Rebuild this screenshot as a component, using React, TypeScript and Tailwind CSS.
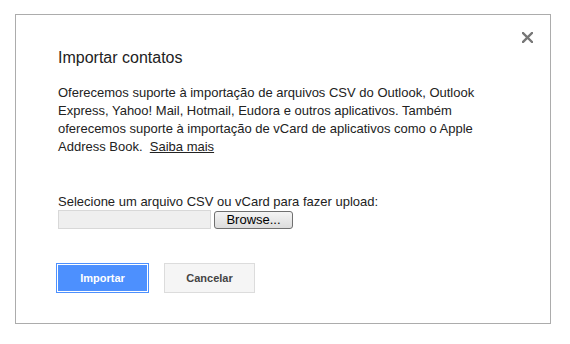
export default function App() {
  return (
    <div className="min-h-[344px] w-[570px] bg-white pl-[15px] pt-[14px] font-['Liberation_Sans',Arial,sans-serif] text-[#222]">
      <div className="relative h-[310px] w-[536px] border border-[#acacac] bg-white pl-[42px] pt-[33px]">
        <button
          type="button"
          aria-label="Fechar"
          className="absolute right-[17px] top-[16px] flex h-[12px] w-[12px] items-center justify-center"
        >
          <svg width="11" height="11" viewBox="0 0 11 11">
            <path d="M1 1 L10 10 M10 1 L1 10" stroke="#777" strokeWidth="2.4" strokeLinecap="square" />
          </svg>
        </button>

        <h2 className="text-[16px] leading-[20px] font-normal">Importar contatos</h2>

        <p className="mt-[16px] w-[440px] text-[13px] leading-[18px]">
          Oferecemos suporte à importação de arquivos CSV do Outlook, Outlook Express, Yahoo! Mail,
          Hotmail, Eudora e outros aplicativos. Também oferecemos suporte à importação de vCard de
          aplicativos como o Apple Address Book.{"\u00a0 "}
          <a href="#" className="underline">
            Saiba mais
          </a>
        </p>

        <div className="mt-[38px] text-[13px] leading-[15px]">
          <div>Selecione um arquivo CSV ou vCard para fazer upload:</div>
          <div className="mt-[1px] flex items-center gap-[3px]">
            <div className="h-[19px] w-[153px] border border-[#d8d8d8] bg-[#efefef]" />
            <button
              type="button"
              className="h-[18px] w-[79px] rounded-[3px] border border-[#707070] bg-gradient-to-b from-[#f4f4f4] to-[#dcdcdc] text-[13px] leading-[16px] text-black"
            >
              Browse...
            </button>
          </div>
        </div>

        <div className="-ml-[2px] mt-[34px] flex gap-[15px]">
          <button
            type="button"
            className="h-[30px] w-[93px] border border-[#4d90fe] bg-[#4d90fe] text-[11px] font-bold text-white outline outline-1 -outline-offset-2 outline-white"
          >
            Importar
          </button>
          <button
            type="button"
            className="h-[30px] w-[91px] border border-[#dcdcdc] bg-[#f5f5f5] text-[11px] font-bold text-[#444]"
          >
            Cancelar
          </button>
        </div>
      </div>
    </div>
  );
}
